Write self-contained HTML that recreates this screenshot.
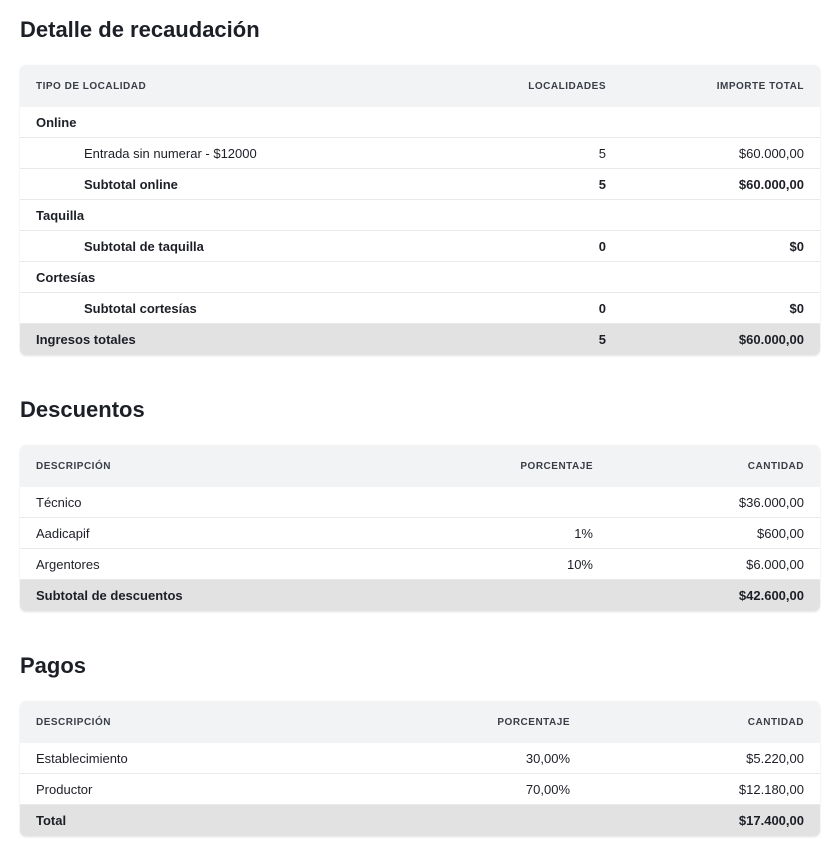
<!DOCTYPE html><html><head><meta charset="utf-8"><style>
body{margin:0;background:#fff;font-family:"Liberation Sans",sans-serif;color:#1d1f27;width:840px;height:847px;position:relative;overflow:hidden}
h2{position:absolute;left:20px;margin:0;font-size:22px;font-weight:bold;line-height:28px}
.t{position:absolute;left:20px;width:800px;border-radius:6px;box-shadow:0 1px 2px rgba(0,0,0,.12);overflow:hidden}
.r{height:30px;border-bottom:1px solid #e8e9ec;position:relative;font-size:13px;line-height:32px}
.h{height:42px;line-height:44px;background:#f2f3f5;font-size:10px;letter-spacing:.5px;color:#3a3d47;border:none;font-weight:bold}
.f{background:#e2e2e3;border:none;font-weight:bold;height:31px;line-height:31px}
.r span{position:absolute}
.l{left:16px}.i{left:64px}
.b{font-weight:bold}
</style></head><body>
<h2 style="top:16px">Detalle de recaudación</h2>
<div class="t" style="top:65px">
<div class="r h"><span class="l">TIPO DE LOCALIDAD</span><span style="right:214px">LOCALIDADES</span><span style="right:16px">IMPORTE TOTAL</span></div>
<div class="r b"><span class="l">Online</span></div>
<div class="r"><span class="i">Entrada sin numerar - $12000</span><span style="right:214px">5</span><span style="right:16px">$60.000,00</span></div>
<div class="r b"><span class="i">Subtotal online</span><span style="right:214px">5</span><span style="right:16px">$60.000,00</span></div>
<div class="r b"><span class="l">Taquilla</span></div>
<div class="r b"><span class="i">Subtotal de taquilla</span><span style="right:214px">0</span><span style="right:16px">$0</span></div>
<div class="r b"><span class="l">Cortesías</span></div>
<div class="r b"><span class="i">Subtotal cortesías</span><span style="right:214px">0</span><span style="right:16px">$0</span></div>
<div class="r f"><span class="l">Ingresos totales</span><span style="right:214px">5</span><span style="right:16px">$60.000,00</span></div>
</div>
<h2 style="top:396px">Descuentos</h2>
<div class="t" style="top:445px">
<div class="r h"><span class="l">DESCRIPCIÓN</span><span style="right:227px">PORCENTAJE</span><span style="right:16px">CANTIDAD</span></div>
<div class="r"><span class="l">Técnico</span><span style="right:16px">$36.000,00</span></div>
<div class="r"><span class="l">Aadicapif</span><span style="right:227px">1%</span><span style="right:16px">$600,00</span></div>
<div class="r"><span class="l">Argentores</span><span style="right:227px">10%</span><span style="right:16px">$6.000,00</span></div>
<div class="r f"><span class="l">Subtotal de descuentos</span><span style="right:16px">$42.600,00</span></div>
</div>
<h2 style="top:652px">Pagos</h2>
<div class="t" style="top:701px">
<div class="r h"><span class="l">DESCRIPCIÓN</span><span style="right:250px">PORCENTAJE</span><span style="right:16px">CANTIDAD</span></div>
<div class="r"><span class="l">Establecimiento</span><span style="right:250px">30,00%</span><span style="right:16px">$5.220,00</span></div>
<div class="r"><span class="l">Productor</span><span style="right:250px">70,00%</span><span style="right:16px">$12.180,00</span></div>
<div class="r f"><span class="l">Total</span><span style="right:16px">$17.400,00</span></div>
</div>
</body></html>
